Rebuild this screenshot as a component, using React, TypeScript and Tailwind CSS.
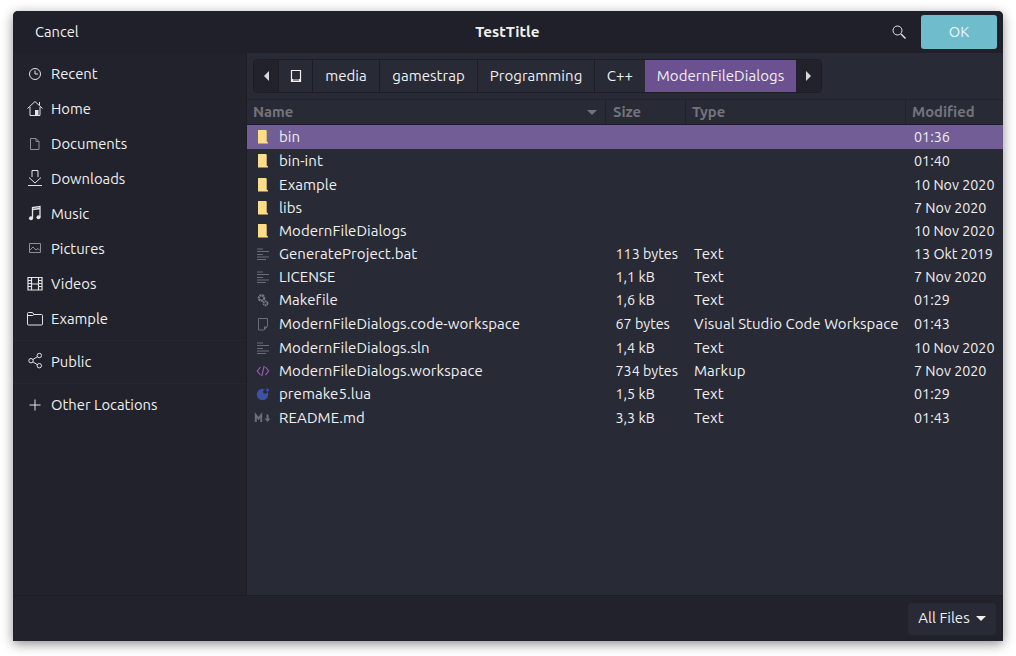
import type { ReactNode } from 'react'

type FileKind = 'folder' | 'text' | 'gear' | 'blank' | 'code' | 'moon' | 'md'

interface FileRow {
  readonly name: string
  readonly size?: string
  readonly type?: string
  readonly modified: string
  readonly kind: FileKind
  readonly height: string
  readonly selected?: boolean
}

// row heights alternate between 23 and 24 in the original list
const short = 'h-[23px] pt-px'
const files: FileRow[] = [
  { name: 'bin', modified: '01:36', kind: 'folder', height: 'h-6', selected: true },
  { name: 'bin-int', modified: '01:40', kind: 'folder', height: 'h-6' },
  { name: 'Example', modified: '10 Nov 2020', kind: 'folder', height: short },
  { name: 'libs', modified: '7 Nov 2020', kind: 'folder', height: short },
  { name: 'ModernFileDialogs', modified: '10 Nov 2020', kind: 'folder', height: short },
  { name: 'GenerateProject.bat', size: '113 bytes', type: 'Text', modified: '13 Okt 2019', kind: 'text', height: short },
  { name: 'LICENSE', size: '1,1 kB', type: 'Text', modified: '7 Nov 2020', kind: 'text', height: short },
  { name: 'Makefile', size: '1,6 kB', type: 'Text', modified: '01:29', kind: 'gear', height: 'h-6' },
  { name: 'ModernFileDialogs.code-workspace', size: '67 bytes', type: 'Visual Studio Code Workspace', modified: '01:43', kind: 'blank', height: 'h-6' },
  { name: 'ModernFileDialogs.sln', size: '1,4 kB', type: 'Text', modified: '10 Nov 2020', kind: 'text', height: short },
  { name: 'ModernFileDialogs.workspace', size: '734 bytes', type: 'Markup', modified: '7 Nov 2020', kind: 'code', height: short },
  { name: 'premake5.lua', size: '1,5 kB', type: 'Text', modified: '01:29', kind: 'moon', height: 'h-6' },
  { name: 'README.md', size: '3,3 kB', type: 'Text', modified: '01:43', kind: 'md', height: 'h-6' },
]

function Icon({ children }: { children: ReactNode }) {
  return (
    <svg width="16" height="16" viewBox="0 0 16 16" fill="none" className="overflow-visible">
      {children}
    </svg>
  )
}

function FileIcon({ kind }: { kind: FileKind }) {
  switch (kind) {
    case 'folder':
      return (
        <Icon>
          <path d="M3 1h8.200l.5 1v10.500l1.300 1V14.500H3z" fill="#ffdd88" />
        </Icon>
      )
    case 'text':
      return (
        <Icon>
          <path d="M2 3h6M2 5.500h12M2 8.500h6M2 11h12M2 13.500h9" stroke="#6b6e78" />
        </Icon>
      )
    case 'gear':
      return (
        <Icon>
          <circle cx="6.500" cy="6" r="2.700" stroke="#7b7e88" strokeWidth="2.200" strokeDasharray="2 0.600" />
          <circle cx="10.500" cy="11.300" r="2" stroke="#7b7e88" strokeWidth="1.800" strokeDasharray="1.500 0.500" />
        </Icon>
      )
    case 'blank':
      return (
        <Icon>
          <path d="M3.500 2.500h9v8L9 14H3.500z" stroke="#6b6e78" />
          <path d="M12.500 10.500H9V14z" fill="#6b6e78" />
        </Icon>
      )
    case 'code':
      return (
        <Icon>
          <path d="M5.500 4 2.300 8l3.200 4M10.500 4l3.200 4-3.200 4M9.200 2.800l-2.400 10.400" stroke="#a15ab8" strokeWidth="1.200" />
        </Icon>
      )
    case 'moon':
      return (
        <Icon>
          <circle cx="7.500" cy="8.500" r="5.700" fill="#3f51a5" />
          <circle cx="10.300" cy="5.600" r="2.200" fill="#282a36" />
          <circle cx="12.500" cy="4" r="1.500" fill="#3f51a5" />
        </Icon>
      )
    case 'md':
      return (
        <Icon>
          <path d="M.8 12V5l2.700 3.500L6.200 5v7" stroke="#6b6e78" strokeWidth="2" />
          <path d="M12.500 4.500v5" stroke="#6b6e78" strokeWidth="2" />
          <path d="M9.500 8.500h6l-3 3.500z" fill="#6b6e78" />
        </Icon>
      )
  }
}

const line = { stroke: '#e4e4e6', strokeWidth: 1 }

const places: { label: string; icon: ReactNode }[] = [
  {
    label: 'Recent',
    icon: (
      <Icon>
        <circle cx="8" cy="8" r="5.500" {...line} />
        <path d="M8 4.500V8h3" {...line} />
      </Icon>
    ),
  },
  {
    label: 'Home',
    icon: (
      <Icon>
        <path d="M.5 7.500 8 .5l7.500 7M3 6v8.500h10V6M12.500 1v3" {...line} />
        <path d="M8 9h3.500v5.500H8z" fill="#e4e4e6" />
      </Icon>
    ),
  },
  {
    label: 'Documents',
    icon: (
      <Icon>
        <path d="M3.500 2.500H9l3 3v8H3.500zM9 2.500v3h3" stroke="#8f9095" />
      </Icon>
    ),
  },
  {
    label: 'Downloads',
    icon: (
      <Icon>
        <path d="M5 6V-.5h6V6M2 6.500 8 12l6-5.500M1 14.500h14" {...line} />
      </Icon>
    ),
  },
  {
    label: 'Music',
    icon: (
      <Icon>
        <path d="M5.500 12V1.500l7.500-1V11" stroke="#e4e4e6" strokeWidth="1.300" />
        <path d="M5.500 3.500 13 2.500" stroke="#e4e4e6" strokeWidth="1.500" />
        <circle cx="4" cy="12.300" r="2" fill="#e4e4e6" />
        <circle cx="11.500" cy="11.300" r="2" fill="#e4e4e6" />
      </Icon>
    ),
  },
  {
    label: 'Pictures',
    icon: (
      <Icon>
        <path d="M2.500 2.500h11v9h-11z" stroke="#8f9095" />
        <path d="m3 9 3-3 3 3 2-1.500 2 2" stroke="#8f9095" />
      </Icon>
    ),
  },
  {
    label: 'Videos',
    icon: (
      <Icon>
        <path d="M1 1.500h14v12.500H1z" stroke="#e4e4e6" strokeWidth="1.200" />
        <path d="M4.500 1.500V14M11.500 1.500V14M4.500 8h7" stroke="#e4e4e6" strokeWidth="1.200" />
        <path d="M1 4.500h3.500M1 7.500h3.500M1 10.500h3.500M11.500 4.500H15M11.500 7.500H15M11.500 10.500H15" stroke="#e4e4e6" />
      </Icon>
    ),
  },
  {
    label: 'Example',
    icon: (
      <Icon>
        <path d="M.5 2.500a1 1 0 0 1 1-1h4l1.500 2h7.500a1 1 0 0 1 1 1v8.500a1 1 0 0 1-1 1h-13a1 1 0 0 1-1-1zM.5 4.500H5.500l1.500-1" {...line} />
      </Icon>
    ),
  },
]

export default function App() {
  return (
    <div className="h-[656px] w-[1016px] overflow-hidden bg-white pl-[13px] pt-[11px] font-['Ubuntu','Noto_Sans',sans-serif]">
      <div className="flex h-[630px] w-[990px] flex-col overflow-hidden rounded-t-[5px] bg-[#282a36] text-[#f0f0f0] shadow-[0_3px_12px_rgba(0,0,0,0.45)]">
        {/* Header */}
        <header className="flex h-[42px] shrink-0 items-center bg-[#1f2029] pr-[6px]">
          <span className="ml-[22px] text-[14.7px]">Cancel</span>
          <span className="flex-1 pl-[45px] text-center text-[15.2px] font-bold">TestTitle</span>
          <svg width="16" height="16" viewBox="0 0 16 16" fill="none" className="mr-[14px]">
            <circle cx="6.500" cy="6.500" r="4.500" stroke="#e8e8e8" />
            <path d="m10 10 4.500 4.500" stroke="#e8e8e8" strokeWidth="1.400" />
          </svg>
          <button type="button" className="h-[34px] w-[76px] rounded-[3px] bg-[#6fbccd] text-[14.7px] text-[#ecf7f9]">
            OK
          </button>
        </header>

        <div className="flex min-h-0 flex-1">
          {/* Places sidebar */}
          <aside className="flex w-[234px] shrink-0 flex-col border-r border-[#1c1d25] bg-[#21222c] pt-[3px] text-[14.8px]">
            {places.map((p) => (
              <div key={p.label} className="flex h-[35px] items-center gap-[8px] pl-[14px] pt-px">
                <span className="flex w-[16px] justify-center">{p.icon}</span>
                <span>{p.label}</span>
              </div>
            ))}
            <div className="mt-[4px] h-px bg-[#25262f]" />
            <div className="mt-[3px] flex h-[35px] items-center gap-[8px] pl-[14px] pt-px">
              <Icon>
                <circle cx="4" cy="6.700" r="2.200" {...line} />
                <circle cx="12.300" cy="1.500" r="2.200" {...line} />
                <circle cx="12.300" cy="11.700" r="2.200" {...line} />
                <path d="m5.900 5.500 4.500-2.800M5.900 7.900l4.500 2.800" {...line} />
              </Icon>
              <span>Public</span>
            </div>
            <div className="mt-[4px] h-px bg-[#25262f]" />
            <div className="mt-[3px] flex h-[35px] items-center gap-[8px] pl-[14px] pt-px">
              <Icon>
                <path d="M8 2.500v11M2.500 8h11" {...line} />
              </Icon>
              <span>Other Locations</span>
            </div>
          </aside>

          {/* File pane */}
          <main className="flex min-w-0 flex-1 flex-col">
            <div className="flex h-[47px] shrink-0 items-start border-b border-[#21222c] pl-[6px] pt-[6px]">
              <nav className="flex h-[34px] overflow-hidden rounded-[4px] border border-[#1c1d25] text-[15px] tracking-[0.05px]">
                <button type="button" className="flex w-[25px] items-center justify-center border-r border-[#1c1d25] bg-[#21222c]">
                  <span className="h-0 w-0 border-y-[5px] border-r-[5px] border-y-transparent border-r-[#d8d8da]" />
                </button>
                <span className="flex w-[34px] items-center justify-center border-r border-[#1c1d25]">
                  <svg width="16" height="16" viewBox="0 0 16 16" fill="none">
                    <path d="M3.500 2.500h9v11h-9z" stroke="#f0f0f0" strokeWidth="1.200" />
                    <path d="M3.500 11h9v2.500h-9z" fill="#f0f0f0" />
                    <path d="M5 12h6" stroke="#282a36" />
                  </svg>
                </span>
                <span className="flex w-[67px] items-center justify-center border-r border-[#1c1d25]">media</span>
                <span className="flex w-[98px] items-center justify-center border-r border-[#1c1d25]">gamestrap</span>
                <span className="flex w-[117px] items-center justify-center border-r border-[#1c1d25]">Programming</span>
                <span className="flex w-[50px] items-center justify-center">C++</span>
                <span className="flex w-[151px] items-center justify-center bg-[#6b5190]">ModernFileDialogs</span>
                <button type="button" className="flex w-[25px] items-center justify-center bg-[#21222c]">
                  <span className="h-0 w-0 border-y-[5px] border-l-[5px] border-y-transparent border-l-[#d8d8da]" />
                </button>
              </nav>
            </div>

            {/* Column headers */}
            <div className="flex h-[25px] shrink-0 border-b border-[#1c1d25] text-[14.8px] font-bold text-[#73747b]">
              <div className="flex w-[359px] items-center justify-between border-r border-[#21222c] pl-[6px] pr-[8px]">
                <span>Name</span>
                <span className="h-0 w-0 border-x-[5px] border-t-[5px] border-x-transparent border-t-[#73747b]" />
              </div>
              <div className="flex w-[80px] items-center border-r border-[#21222c] pl-[7px]">Size</div>
              <div className="flex w-[220px] items-center border-r border-[#21222c] pl-[6px]">Type</div>
              <div className="flex flex-1 items-center pl-[6px]">Modified</div>
            </div>

            {/* File rows */}
            <div className="min-h-0 flex-1">
              {files.map((f) => (
                <div key={f.name} className={`flex ${f.height} items-center whitespace-nowrap ${f.selected ? 'bg-[#725d96]' : ''}`}>
                  <div className="flex w-[359px] items-center text-[15px] tracking-[0.06px]">
                    <span className="mx-[8px] flex w-[16px] justify-center">
                      <FileIcon kind={f.kind} />
                    </span>
                    <span>{f.name}</span>
                  </div>
                  <div className="w-[80px] pl-[9.500px] text-[14.300px] leading-[22.500px]">{f.size}</div>
                  <div className="w-[220px] pl-[8px] text-[15px] tracking-[0.05px]">{f.type}</div>
                  <div className="flex-1 pl-[8px] text-[14.300px] leading-[22.500px]">{f.modified}</div>
                </div>
              ))}
            </div>
          </main>
        </div>

        {/* Footer */}
        <footer className="flex h-[46px] shrink-0 items-center justify-end border-t border-[#1c1d25] bg-[#21222c] pr-[7px]">
          <button type="button" className="flex h-8 w-[88px] items-center justify-center gap-[6px] rounded-[3px] bg-[#282a36] text-[15px]">
            All Files
            <span className="h-0 w-0 border-x-[5px] border-t-[5px] border-x-transparent border-t-[#f0f0f0]" />
          </button>
        </footer>
      </div>
    </div>
  )
}
